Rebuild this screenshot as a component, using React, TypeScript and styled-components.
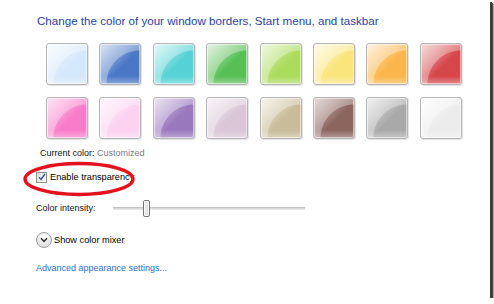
import styled, { createGlobalStyle } from "styled-components";

const GlobalStyle = createGlobalStyle`
  body {
    margin: 0;
    background: #ffffff;
    font-family: "Liberation Sans", Arial, sans-serif;
  }
`;

const Window = styled.div`
  position: relative;
  width: 490px;
  height: 298px;
  box-sizing: border-box;
  background: #ffffff;
  box-shadow: 2px 2px 0 #3c3c3c, 3px 3px 0 #4a4a4a, 4px 4px 1px #a8a8a8;
  padding: 14px 0 0 36px;
  display: flex;
  flex-direction: column;
  align-items: flex-start;
`;

const Title = styled.h1`
  margin: 0 0 0 1px;
  font-size: 11.6px;
  line-height: 14px;
  font-weight: normal;
  color: #1f44a8;
`;

const SwatchGrid = styled.div`
  margin: 15px 0 0 10px;
  display: grid;
  grid-template-columns: repeat(8, 42px);
  column-gap: 11.4px;
  row-gap: 12px;
`;

const Swatch = styled.div<{ $color: string; $edge: string }>`
  width: 42px;
  height: 42px;
  box-sizing: border-box;
  border: 1px solid #b4b4b4;
  border-radius: 3px;
  box-shadow: inset 0 0 0 1px rgba(255, 255, 255, 0.55),
    1px 1px 1px rgba(0, 0, 0, 0.12);
  background:
    linear-gradient(
      to bottom,
      rgba(255, 255, 255, 0) 80%,
      rgba(255, 255, 255, 0.35) 100%
    ),
    radial-gradient(
      circle at 100% 100%,
      rgba(255, 255, 255, 0) 33px,
      rgba(255, 255, 255, 0.32) 34px
    ),
    linear-gradient(135deg, ${(p) => p.$edge} 0%, ${(p) => p.$color} 55%);
`;

const Line = styled.div<{ $top: number; $indent?: number }>`
  margin: ${(p) => p.$top}px 0 0 ${(p) => p.$indent ?? 0}px;
  font-size: 9px;
  line-height: 12px;
  color: #111111;
`;

const Muted = styled.span`
  color: #7c7c7c;
`;

const CheckRow = styled.label`
  margin-top: 11px;
  display: flex;
  align-items: center;
  gap: 3px;
  font-size: 9.2px;
  line-height: 14px;
  color: #000000;
`;

const CheckBox = styled.span`
  width: 11px;
  height: 11px;
  box-sizing: border-box;
  border: 1px solid #8e8f8f;
  background: linear-gradient(135deg, #dcdcdc, #fbfbfb);
  display: flex;
  align-items: center;
  justify-content: center;
`;

const SliderRow = styled.div`
  margin-top: 15px;
  height: 18px;
  display: flex;
  align-items: center;
  font-size: 9px;
  color: #111111;
`;

const SliderLabel = styled.span`
  width: 77px;
`;

const Track = styled.div`
  position: relative;
  width: 192px;
  height: 3px;
  box-sizing: border-box;
  border-top: 1px solid #c4c4c4;
  border-bottom: 1px solid #e6e6e6;
  background: #d8d8d8;
`;

const Thumb = styled.div`
  position: absolute;
  top: -8px;
  width: 7px;
  height: 17px;
  box-sizing: border-box;
  border: 1px solid #767676;
  border-radius: 2px;
  background: linear-gradient(to right, #f4f4f4, #dadada);
  box-shadow: inset 0 0 0 1px #ffffff;
`;

const MixerRow = styled.div`
  margin-top: 15px;
  display: flex;
  align-items: center;
  gap: 2px;
  font-size: 9.2px;
  line-height: 16px;
  color: #000000;
`;

const RoundButton = styled.span`
  width: 16px;
  height: 16px;
  box-sizing: border-box;
  border-radius: 50%;
  border: 1px solid #9c9c9c;
  background: radial-gradient(circle at 50% 30%, #ffffff, #dedede 80%);
  display: flex;
  align-items: center;
  justify-content: center;
`;

const Link = styled.a`
  margin-top: 14px;
  font-size: 9px;
  line-height: 12px;
  color: #2a6fd0;
  text-decoration: none;
`;

const Annotation = styled.svg`
  position: absolute;
  left: 22px;
  top: 161px;
`;

const swatches = [
  ["#d6e8fb", "#f6fbff"],
  ["#4b78c6", "#c8d6ee"],
  ["#55d2d4", "#d4f4f4"],
  ["#57bf55", "#d6efd4"],
  ["#abdc5c", "#e9f6d2"],
  ["#fae57c", "#fff9de"],
  ["#fbb54a", "#fdebd2"],
  ["#d6474a", "#f2cccc"],
  ["#f97cc9", "#fdd6ef"],
  ["#fbd2f0", "#fff2fb"],
  ["#9a78bd", "#e2d6ec"],
  ["#dac6d6", "#f6f0f4"],
  ["#c9bc98", "#f2efe4"],
  ["#8c655f", "#d9c9c6"],
  ["#a9a9a9", "#ececec"],
  ["#ececec", "#fdfdfd"],
];

export default function App() {
  return (
    <>
      <GlobalStyle />
      <Window>
        <Title>
          Change the color of your window borders, Start menu, and taskbar
        </Title>
        <SwatchGrid>
          {swatches.map(([c, e], i) => (
            <Swatch key={i} $color={c} $edge={e} />
          ))}
        </SwatchGrid>
        <Line $top={8} $indent={4}>
          Current color: <Muted>Customized</Muted>
        </Line>
        <CheckRow>
          <CheckBox>
            <svg width="8" height="8" viewBox="0 0 8 8">
              <path
                d="M1 4.2 L3 6.4 L7 1"
                fill="none"
                stroke="#3b5294"
                strokeWidth="1.4"
              />
            </svg>
          </CheckBox>
          Enable transparency
        </CheckRow>
        <SliderRow>
          <SliderLabel>Color intensity:</SliderLabel>
          <Track>
            <Thumb style={{ left: 30 }} />
          </Track>
        </SliderRow>
        <MixerRow>
          <RoundButton>
            <svg width="8" height="6" viewBox="0 0 8 6">
              <path
                d="M1 1.2 L4 4.3 L7 1.2"
                fill="none"
                stroke="#333333"
                strokeWidth="1.5"
              />
            </svg>
          </RoundButton>
          Show color mixer
        </MixerRow>
        <Link href="#">Advanced appearance settings...</Link>
        <Annotation width="116" height="38" viewBox="0 0 116 38">
          <ellipse
            cx="57"
            cy="18"
            rx="54"
            ry="15.5"
            fill="none"
            stroke="#e3121c"
            strokeWidth="3.4"
          />
        </Annotation>
      </Window>
    </>
  );
}
